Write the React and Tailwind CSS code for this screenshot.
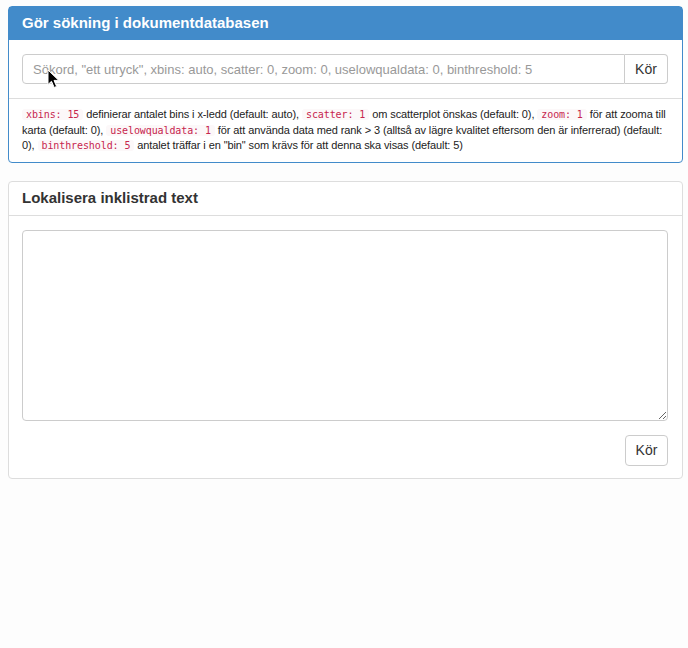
import React from "react";

function Code({ children }) {
  return (
    <code className="px-[4px] rounded-[3px] bg-[#fcf8f9] text-[#c7254e] text-[10px] [font-family:'DejaVu_Sans_Mono',monospace]">
      {children}
    </code>
  );
}

export default function App() {
  return (
    <div className="min-h-[648px] w-[688px] bg-[#fdfdfd] pt-[6px] pl-[8px] [font-family:'Liberation_Sans',Arial,sans-serif] text-[#333]">
      <div className="w-[675px] border border-[#428bca] rounded-[4px] bg-white relative">
        <div className="bg-[#428bca] h-[33px] px-[13px] flex items-center text-white text-[15px] font-bold">
          Gör sökning i dokumentdatabasen
        </div>
        <div className="pl-[13px] pr-[14px] py-[14px] flex">
          <input
            className="flex-1 h-[30px] border border-[#ccc] rounded-l-[4px] px-[10px] text-[13px] outline-none placeholder:text-[#999] bg-white"
            placeholder={'Sökord, "ett utryck", xbins: auto, scatter: 0, zoom: 0, uselowqualdata: 0, binthreshold: 5'}
          />
          <button className="w-[43px] h-[30px] border border-[#ccc] border-l-0 rounded-r-[4px] bg-white text-[14px] text-[#333]">
            Kör
          </button>
        </div>
        <div className="border-t border-[#ddd] pl-[13px] pr-[8px] pt-[8px] pb-[8px] text-[11px] leading-[15.5px] text-[#222] tracking-[-0.1px]">
          <Code>xbins: 15</Code> definierar antalet bins i x-ledd (default: auto),{" "}
          <Code>scatter: 1</Code> om scatterplot önskas (default: 0), <Code>zoom: 1</Code> för att zooma till
          karta (default: 0), <Code>uselowqualdata: 1</Code> för att använda data med rank &gt; 3 (alltså av lägre
          kvalitet eftersom den är inferrerad) (default: 0), <Code>binthreshold: 5</Code> antalet träffar i en "bin"
          som krävs för att denna ska visas (default: 5)
        </div>
        <svg className="absolute left-[38px] top-[62px]" width="14" height="20" viewBox="0 0 14 20">
          <path d="M1 1 L1 15.5 L4.5 12.3 L7.2 18.5 L9.6 17.4 L7 11.4 L11.8 11.4 Z" fill="#000" stroke="#fff" strokeWidth="1" strokeLinejoin="round" />
        </svg>
      </div>

      <div className="mt-[18px] w-[675px] border border-[#ddd] rounded-[4px] bg-white">
        <div className="h-[34px] px-[13px] flex items-center border-b border-[#ddd] text-[15px] font-semibold text-[#333]">
          Lokalisera inklistrad text
        </div>
        <div className="pl-[13px] pr-[14px] pt-[14px] pb-[12px] flex flex-col">
          <textarea className="block w-full h-[191px] border border-[#ccc] rounded-[4px] outline-none bg-white" />
          <div className="flex justify-end mt-[14px]">
            <button className="w-[43px] h-[31px] border border-[#ccc] rounded-[4px] bg-white text-[14px] text-[#333]">
              Kör
            </button>
          </div>
        </div>
      </div>
    </div>
  );
}
